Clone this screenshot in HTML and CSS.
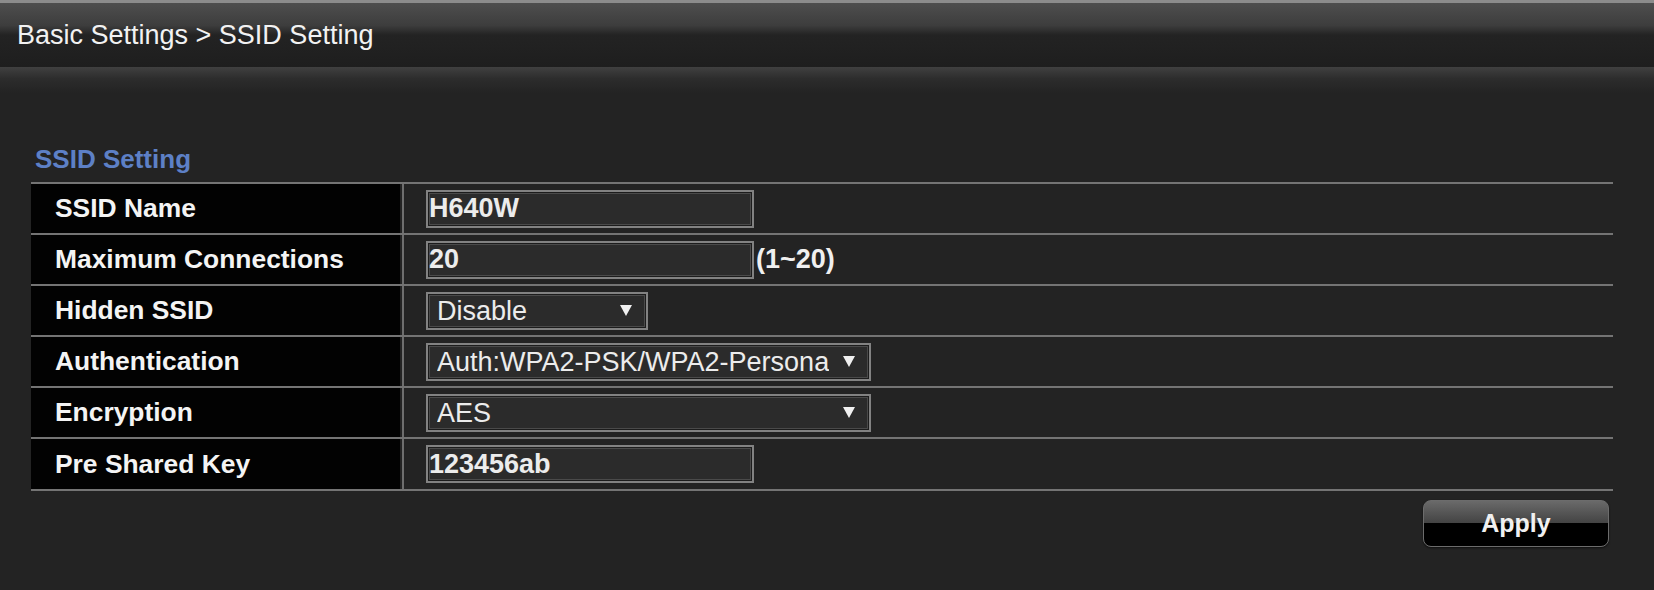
FILE: index.html
```html
<!DOCTYPE html>
<html lang="en">
<head>
  <meta charset="UTF-8" />
  <title>SSID Setting</title>
  <link rel="stylesheet" href="styles.css">
</head>
<body>

  <!-- Breadcrumb bar -->
  <div class="header">Basic Settings &gt; SSID Setting</div>

  <div class="content">
    <h3 class="section-title">SSID Setting</h3>

    <div class="settings-table">
      <div class="row">
        <div class="label">SSID Name</div>
        <div class="value"><input class="text-input" type="text" value="H640W"></div>
      </div>
      <div class="row">
        <div class="label">Maximum Connections</div>
        <div class="value">
          <input class="text-input" type="text" value="20">
          <span class="hint">(1~20)</span>
        </div>
      </div>
      <div class="row">
        <div class="label">Hidden SSID</div>
        <div class="value">
          <span class="select-wrap short">
            <select><option>Disable</option><option>Enable</option></select>
          </span>
        </div>
      </div>
      <div class="row">
        <div class="label">Authentication</div>
        <div class="value">
          <span class="select-wrap long">
            <select><option>Auth:WPA2-PSK/WPA2-Personal</option></select>
          </span>
        </div>
      </div>
      <div class="row">
        <div class="label">Encryption</div>
        <div class="value">
          <span class="select-wrap long">
            <select><option>AES</option><option>TKIP</option></select>
          </span>
        </div>
      </div>
      <div class="row">
        <div class="label">Pre Shared Key</div>
        <div class="value"><input class="text-input" type="text" value="123456ab"></div>
      </div>
    </div>

    <div class="actions">
      <button type="button" class="apply-btn">Apply</button>
    </div>
  </div>

</body>
</html>
```

FILE: styles.css
```css
* {
  margin: 0;
  padding: 0;
  box-sizing: border-box;
}

body {
  font-family: 'Liberation Sans', Arial, sans-serif;
  background-color: #232323;
  color: #f0f0f0;
  height: 100vh;
  overflow: hidden;
}

.header {
  height: 67px;
  border-top: 3px solid #8c8c8c;
  background: linear-gradient(#4e4e4e 0%, #3d3d3d 35%, #232323 50%, #1e1e1e 100%);
  padding-left: 17px;
  font-size: 27px;
  line-height: 64px;
  color: #f2f2f2;
}

.content {
  background: linear-gradient(#404040 0px, #2c2c2c 12px, #232323 26px) no-repeat;
  padding: 77px 41px 0 31px;
}

.section-title {
  font-size: 26px;
  font-weight: bold;
  line-height: 30px;
  color: #5d80c6;
  padding-left: 4px;
  margin-bottom: 8px;
}

.settings-table {
  border-top: 2px solid #747474;
}

.row {
  display: grid;
  grid-template-columns: 369px 1fr;
  height: 51.1px;
  border-bottom: 2px solid #747474;
}

.label {
  background-color: #020202;
  display: flex;
  align-items: center;
  padding-left: 24px;
  font-size: 26.4px;
  font-weight: bold;
  color: #f4f4f4;
}

.value {
  display: flex;
  align-items: center;
  margin-left: 2px;
  border-left: 2px solid #6e6e6e;
  padding-left: 22px;
}

.text-input {
  width: 328px;
  height: 38px;
  border: 2px solid #828282;
  box-shadow: inset 0 0 0 1px #1c1c1c, inset 0 0 0 2px #4a4a4a;
  background-color: #2b2b2b;
  color: #ececec;
  font-family: 'Liberation Sans', Arial, sans-serif;
  font-size: 27px;
  font-weight: bold;
  padding: 0 1px;
  outline: none;
}

.hint {
  margin-left: 2px;
  font-size: 27px;
  font-weight: bold;
  color: #f0f0f0;
}

.select-wrap {
  position: relative;
  display: inline-block;
}

.select-wrap.short {
  width: 222px;
}

.select-wrap.long {
  width: 445px;
}

.select-wrap select {
  appearance: none;
  -webkit-appearance: none;
  width: 100%;
  height: 38px;
  border: 2px solid #828282;
  box-shadow: inset 0 0 0 1px #1c1c1c, inset 0 0 0 2px #4a4a4a;
  background-color: #2b2b2b;
  color: #ececec;
  font-family: 'Liberation Sans', Arial, sans-serif;
  font-size: 27px;
  padding: 0 40px 0 9px;
  outline: none;
}

/* dropdown arrow */
.select-wrap::after {
  content: '';
  position: absolute;
  right: 16px;
  top: 13px;
  border-left: 6px solid transparent;
  border-right: 6px solid transparent;
  border-top: 11px solid #f0f0f0;
  pointer-events: none;
}

.actions {
  display: flex;
  justify-content: flex-end;
  padding: 9px 4px 0 0;
}

.apply-btn {
  width: 186px;
  height: 47px;
  border: 1px solid #6c6c6c;
  border-radius: 8px;
  background: linear-gradient(#6a6a6a 0%, #444 48%, #000 50%, #000 100%);
  color: #f0f0f0;
  font-family: 'Liberation Sans', Arial, sans-serif;
  font-size: 25px;
  font-weight: bold;
  cursor: pointer;
  box-shadow: 0 1px 2px rgba(0, 0, 0, 0.6);
}
```
